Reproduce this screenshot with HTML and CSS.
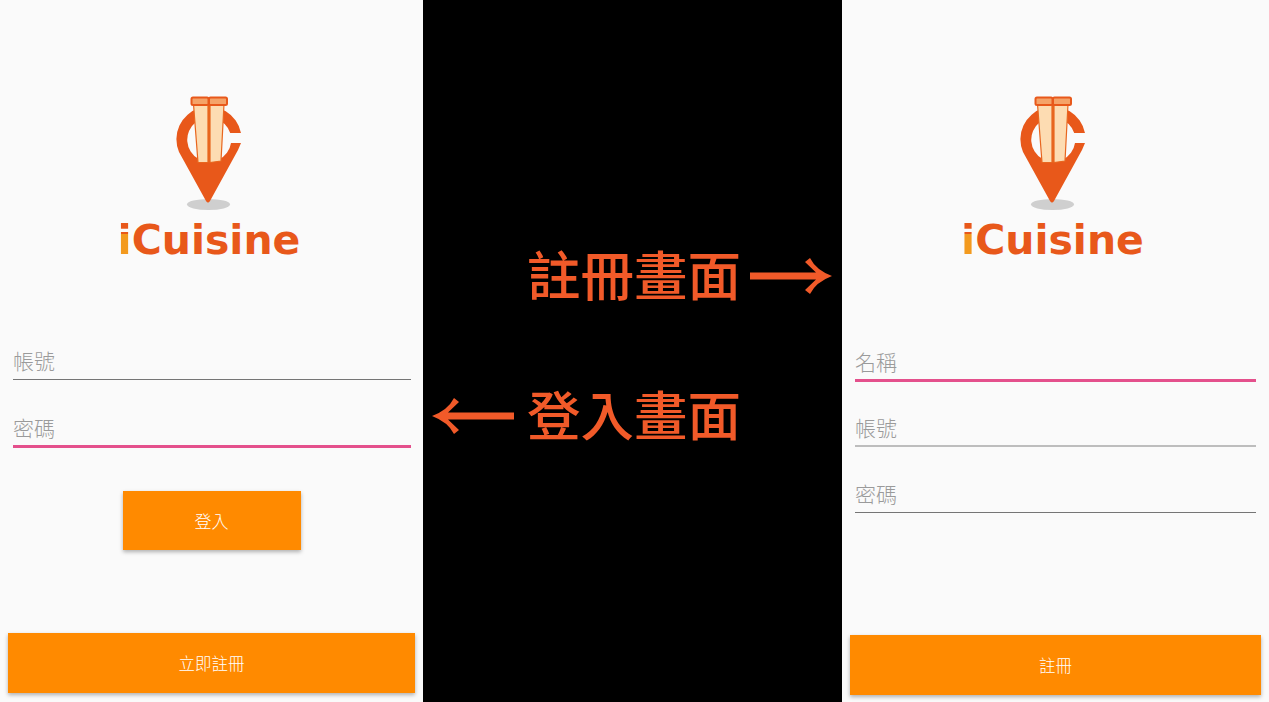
FILE: index.html
```html
<!DOCTYPE html>
<html lang="zh-Hant">
<head>
<meta charset="utf-8">
<title>iCuisine</title>
<link rel="stylesheet" href="styles.css">
</head>
<body>
<main class="screens">
  <section class="phone phone-login">
    <div class="logo">
      <svg class="pin" viewBox="0 0 90 125" width="90" height="125" aria-hidden="true">
        <ellipse cx="43.5" cy="114.5" rx="21.5" ry="5.5" fill="#cfcfcf"/>
        <path fill="#e8581a" d="M76 43A32.6 32.6 0 1 0 14 62L41 111Q43 114 45 111L73 60L76 53H66A22 22 0 1 1 65.2 43Z"/>
        <rect x="42" y="14" width="4" height="58" fill="#e8661f"/>
        <path fill="#fddcb2" stroke="#e8661f" stroke-width="1.2" d="M28.5 14H43V72.5H33Z"/>
        <path fill="#fddcb2" stroke="#e8661f" stroke-width="1.2" d="M45 14H59L56 71L45 72.5Z"/>
        <rect x="26.5" y="7.5" width="17" height="7.5" rx="1.5" fill="#f5a368" stroke="#e8581a" stroke-width="2"/>
        <rect x="44" y="7.5" width="18" height="7.5" rx="1.5" fill="#f5a368" stroke="#e8581a" stroke-width="2"/>
      </svg>
      <div class="wordmark"><span class="wordmark-i">i</span>Cuisine</div>
    </div>
    <div class="fields">
      <div class="field line-dark"><span class="hint">帳號</span></div>
      <div class="field line-pink"><span class="hint">密碼</span></div>
    </div>
    <div class="btn btn-login">登入</div>
    <div class="btn btn-wide btn-wide-login">立即註冊</div>
  </section>

  <section class="middle">
    <div class="note note-right">
      <span class="note-text">註冊畫面</span>
      <svg class="arrow" viewBox="0 0 82 40" width="82" height="40" aria-hidden="true">
        <path fill="#f15a29" d="M0 16.5H66L55 6L60 2Q66 14 82 20Q66 26 60 38L55 34L66 23.5H0Z"/>
      </svg>
    </div>
    <div class="note note-left">
      <svg class="arrow" viewBox="0 0 82 40" width="82" height="40" aria-hidden="true">
        <path fill="#f15a29" d="M82 16.5H16L27 6L22 2Q16 14 0 20Q16 26 22 38L27 34L16 23.5H82Z"/>
      </svg>
      <span class="note-text">登入畫面</span>
    </div>
  </section>

  <section class="phone phone-register">
    <div class="logo">
      <svg class="pin" viewBox="0 0 90 125" width="90" height="125" aria-hidden="true">
        <ellipse cx="43.5" cy="114.5" rx="21.5" ry="5.5" fill="#cfcfcf"/>
        <path fill="#e8581a" d="M76 43A32.6 32.6 0 1 0 14 62L41 111Q43 114 45 111L73 60L76 53H66A22 22 0 1 1 65.2 43Z"/>
        <rect x="42" y="14" width="4" height="58" fill="#e8661f"/>
        <path fill="#fddcb2" stroke="#e8661f" stroke-width="1.2" d="M28.5 14H43V72.5H33Z"/>
        <path fill="#fddcb2" stroke="#e8661f" stroke-width="1.2" d="M45 14H59L56 71L45 72.5Z"/>
        <rect x="26.5" y="7.5" width="17" height="7.5" rx="1.5" fill="#f5a368" stroke="#e8581a" stroke-width="2"/>
        <rect x="44" y="7.5" width="18" height="7.5" rx="1.5" fill="#f5a368" stroke="#e8581a" stroke-width="2"/>
      </svg>
      <div class="wordmark"><span class="wordmark-i">i</span>Cuisine</div>
    </div>
    <div class="fields">
      <div class="field line-pink"><span class="hint">名稱</span></div>
      <div class="field line-light"><span class="hint">帳號</span></div>
      <div class="field line-dark"><span class="hint">密碼</span></div>
    </div>
    <div class="btn btn-wide btn-wide-register">註冊</div>
  </section>
</main>
</body>
</html>
```

FILE: styles.css
```css
* {
  box-sizing: border-box;
}

html,
body {
  margin: 0;
  height: 702px;
  overflow: hidden;
  background: #000;
  font-family: Roboto, "Noto Sans CJK TC", sans-serif;
}

.screens {
  display: flex;
  width: 1269px;
  height: 702px;
}

.phone {
  display: flex;
  flex-direction: column;
  height: 702px;
  background: #fafafa;
}

.phone-login {
  width: 423px;
  padding: 90px 12px 9px 13px;
}

.phone-register {
  width: 427px;
  padding: 90px 13px 7px 13px;
}

.logo {
  display: flex;
  flex-direction: column;
  align-items: center;
  height: 173px;
  padding-right: 6px;
}

.pin {
  display: block;
  flex: none;
  margin-left: 2px;
}

.wordmark {
  margin-top: -5px;
  font-family: "DejaVu Sans", sans-serif;
  font-size: 41px;
  font-weight: 700;
  line-height: 60px;
  color: #e8581a;
}

.wordmark-i {
  background: linear-gradient(#e8581a 0 38%, #f39a1e 38%);
  background-clip: text;
  -webkit-background-clip: text;
  color: transparent;
}

.fields {
  display: flex;
  flex-direction: column;
  gap: 33px;
}

.phone-login .fields {
  margin-top: 84px;
}

.phone-register .fields {
  margin-top: 86px;
}

.phone-login .line-pink {
  height: 35px;
}

.phone-register .line-light {
  height: 32px;
}

.field {
  height: 33px;
  display: flex;
  align-items: flex-end;
}

.hint {
  font-size: 21px;
  font-weight: 300;
  line-height: 30px;
  color: #9a9a9a;
  margin-bottom: 2px;
}

.line-dark {
  border-bottom: 1px solid #757575;
}

.line-light {
  border-bottom: 2px solid #bdbdbd;
}

.line-pink {
  border-bottom: 3px solid #e4508c;
}

.line-pink .hint,
.line-light .hint {
  margin-bottom: 1px;
}

.btn {
  display: flex;
  align-items: center;
  justify-content: center;
  background: #ff8a00;
  color: #fff;
  box-shadow: 0 2px 4px rgba(0, 0, 0, 0.3);
}

.btn-login {
  align-self: center;
  width: 178px;
  height: 59px;
  margin-top: 43px;
  font-size: 17px;
  font-weight: 300;
  margin-left: -1px;
}

.btn-wide {
  height: 60px;
  margin-top: auto;
  font-size: 16.5px;
  font-weight: 300;
}

.btn-wide-login {
  margin-left: -5px;
  margin-right: -4px;
}

.btn-wide-register {
  margin-left: -5px;
  margin-right: -5px;
}

.middle {
  width: 419px;
  display: flex;
  flex-direction: column;
  gap: 64px;
  padding: 238px 0 0 9px;
  background: #000;
}

.note {
  display: flex;
  align-items: center;
  height: 76px;
}

.note-right {
  padding-left: 95px;
  gap: 9px;
}

.note-left {
  gap: 13px;
}

.note-text {
  margin-top: -6px;
  font-family: "Noto Sans CJK TC", sans-serif;
  font-size: 53.5px;
  font-weight: 500;
  line-height: 76px;
  color: #f15a29;
  white-space: nowrap;
}

.arrow {
  display: block;
  flex: none;
}
```
